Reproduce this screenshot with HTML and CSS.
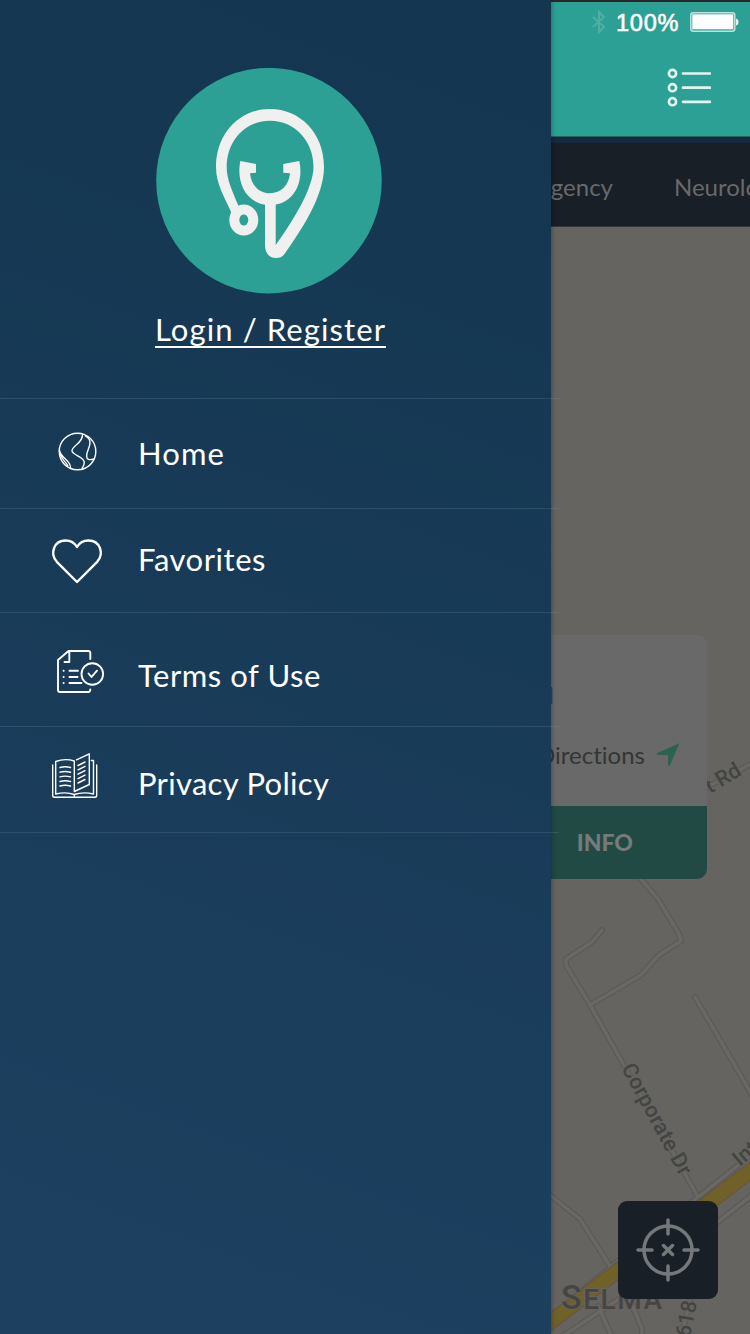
FILE: index.html
```html
<!DOCTYPE html>
<html lang="en">
<head>
<meta charset="utf-8">
<title>Menu</title>
<link rel="stylesheet" href="styles.css">
</head>
<body>
<div class="screen">
  <div class="app">
    <header class="topbar">
      <div class="status">
        <svg class="bluetooth" width="16" height="26" viewBox="0 0 16 26"><path d="M2 8L13 18L8 23V3L13 8L2 18"/></svg>
        <span class="percent">100%</span>
        <svg class="battery" width="49" height="20" viewBox="0 0 49 20"><rect x=".8" y=".8" width="44" height="18.4" rx="2.5" fill="none" stroke="#bfe2dd" stroke-width="1.5"/><rect x="2.3" y="2.3" width="41" height="15" fill="#fff"/><path d="M46 6.5q2.5.5 2.5 3.5T46 13.500z" fill="#e8f5f3"/></svg>
      </div>
      <svg class="list-icon" width="44" height="40" viewBox="0 0 44 40" fill="none" stroke="#e3f3f0"><g stroke-width="2.6"><circle cx="5.500" cy="5.500" r="3.600"/><circle cx="5.500" cy="19.700" r="3.600"/><circle cx="5.500" cy="33.700" r="3.600"/></g><path d="M16 5.500H43M16 19.700H43M16 33.800H43" stroke-width="2.700" stroke-linecap="round"/></svg>
    </header>
    <nav class="tabs">
      <span class="tab tab-emergency">Emergency</span>
      <span class="tab tab-neurology">Neurology</span>
    </nav>
    <main class="map">
      <svg class="streets" width="750" height="1108" viewBox="0 226 750 1108">
        <defs>
          <g id="roads" fill="none" stroke-linejoin="round" stroke-linecap="round">
            <path d="M640 877L658 898L679 933L681 940L659 954L641 974L590 1004"/>
            <path d="M602 929L592 941L566 958V964L590 1004L698 1196"/>
            <path d="M695 996L752 1094"/>
            <path d="M545 1190L580 1218L608 1262L624 1284L642 1328V1338"/>
            <path d="M700 790L760 758"/>
            <path d="M540 1325L620 1258L760 1147"/>
            <path d="M540 1350L622 1296L760 1188"/>
            <path d="M598 1305L613 1338M690 1300L680 1340"/>
          </g>
        </defs>
        <use href="#roads" stroke="#5c5a56" stroke-width="6"/>
        <use href="#roads" stroke="#6a6865" stroke-width="3.500"/>
        <path d="M540 1329L620 1268L756 1166" fill="none" stroke="#6a543f" stroke-width="16"/>
        <path d="M540 1329L620 1268L756 1166" fill="none" stroke="#706128" stroke-width="13.500"/>
        <g class="street-label">
          <text transform="translate(621 1067) rotate(61.500)" textLength="124">Corporate Dr</text>
          <text transform="translate(710 793) rotate(-31)">t Rd</text>
          <text transform="translate(740 1166) rotate(-40)">Interstate</text>
          <text transform="translate(690 1337) rotate(-79)">618</text>
        </g>
        <text class="city" x="561" y="1308" textLength="101"><tspan class="city-initial">S</tspan>ELMA</text>
      </svg>
      <article class="card">
        <p class="place">Wellness Clinic Alabama Hospital</p>
        <p class="directions">Directions
          <svg width="24" height="24" viewBox="0 0 24 24"><path d="M23.500.3L13.500 23Q12 23 12 21.500V12.200L1.500 11.800Q0 11 1.200 10Z" fill="#2b6251"/></svg>
        </p>
        <div class="info">INFO</div>
      </article>
      <div class="locate">
        <svg width="64" height="64" viewBox="0 0 64 64" fill="none" stroke="#74787b" stroke-width="3.500" stroke-linecap="round"><circle cx="32" cy="32" r="24"/><path d="M32 2V16M32 48V62M2 32H16M48 32H62M27.500 27.500L36.500 36.500M36.500 27.500L27.500 36.500"/></svg>
      </div>
    </main>
  </div>

  <aside class="drawer">
    <div class="profile">
      <svg class="logo" width="226" height="226" viewBox="156 68 226 226">
        <circle cx="269" cy="180.700" r="112.800" fill="#2ca095"/>
        <g fill="#f0f0f0">
          <path d="M265 200V245C265 253 269 258 276 258C280 258 282 257 284.500 254C300 232 324 197 324 167C324 133 300 109 270 109C240 109 216 133 216 167C216 184 224 196 232 214L239 207C232 190 226.700 180 226.700 167C226.700 141 245 120.700 270 120.700C295 120.700 313.500 141 313.500 167C313.500 187 294 220 275.700 245V200Z"/>
          <path d="M240.300 161L256 164V172.700L250 173.300C251 185 259 193.300 270 193.300C281 193.300 289 185 290 173.300L283.300 172.700V164L299.300 161C304 182 294 205 270 205C246 205 236 182 240.300 161Z"/>
        </g>
        <ellipse cx="243.800" cy="220" rx="9.500" ry="10.600" fill="none" stroke="#f0f0f0" stroke-width="10"/>
      </svg>
      <a class="login">Login / Register</a>
    </div>
    <ul class="menu">
      <li class="item home">
        <svg width="52" height="52" viewBox="52 426 52 52" stroke-width="1.400"><circle cx="77.500" cy="451.500" r="18.300"/><path d="M82.500 434C83.500 443 71.500 446 72 451C72.500 455 84 457 84.300 462C84.500 465 83 467 81.700 469M85 435.500C88 437 89.500 438.500 90 442C90.500 447 86.500 451 86.600 456C86.700 459.500 89 460.500 94 459M59.300 450C61 459 70 459 70.700 468M60 454C63 461 65 461 68 466"/></svg>
        <span class="label">Home</span>
      </li>
      <li class="item favorites">
        <svg width="52" height="52" viewBox="52 535 52 52" stroke-width="2.400"><path d="M77 582L56.800 561.800C49.500 553.500 54 540.500 65.500 540.500C71 540.500 75 543.500 77 547C79 543.500 83 540.500 88.500 540.500C100 540.500 104.500 553.500 97.200 561.800Z"/></svg>
        <span class="label">Favorites</span>
      </li>
      <li class="item terms">
        <svg width="52" height="52" viewBox="52 645 52 52" stroke-width="1.900" stroke-linecap="round"><path d="M90.300 659V653Q90.300 651 88.300 651H68.500L58 660V690Q58 692 60 692H88.300Q90.300 692 90.300 689.500M69.300 651V662H64.500M69.500 670.700H78M69.500 677H77.500M69.500 683H81.500M63.600 670.700h.1M63.600 677h.1M63.600 683h.1M88.500 673.500L91.500 677L97 670.700"/><circle cx="92.300" cy="674" r="10.800"/></svg>
        <span class="label">Terms of Use</span>
      </li>
      <li class="item privacy">
        <svg width="52" height="52" viewBox="52 750 52 52" stroke-width="1.400" stroke-linecap="round"><path d="M52.700 765V795.500Q52.700 797.300 54.700 797.300H94.700Q96.700 797.300 96.700 795.500V765M74.300 794.500Q66 791.500 55.700 794V761.500Q65 758 74.300 761V791.500L89.300 784.500V753.800L76.500 759.800M91.300 760.500H93.500V794Q83 791.500 74.300 794.500V797M60 767.500Q65 766 70.500 767.500M60 772.200Q65 770.700 70.500 772.200M60 776.900Q65 775.400 70.500 776.900M60 781.500Q65 780 70.500 781.500M60 786Q65 784.500 70.500 786M78 765.500L85 762M78 769.800L85 766.300M78 774.200L85 770.700M78 778.600L85 775.100M78 783L85 779.500"/></svg>
        <span class="label">Privacy Policy</span>
      </li>
    </ul>
  </aside>
</div>
</body>
</html>
```
FILE: styles.css
```css
* { box-sizing: border-box; }
body { margin: 0; font-family: Lato, sans-serif; font-variant-ligatures: none; }
p, ul { margin: 0; padding: 0; }
svg { display: block; flex: none; }

.screen { position: relative; width: 750px; height: 1334px; overflow: hidden; }
.app { display: flex; flex-direction: column; height: 100%; }

.topbar {
  height: 137px;
  border-top: 2px solid #2b2729;
  border-bottom: 1px solid #24645f;
  background: #2ca095;
  display: flex;
  flex-direction: column;
  align-items: flex-end;
}
.status { display: flex; align-items: center; height: 40px; padding-right: 11px; color: #fff; }
.bluetooth { fill: none; stroke: #50aea3; stroke-width: 2; margin-right: 9px; }
.percent { font: 500 23.500px/40px "Liberation Sans", Arial, sans-serif; width: 65px; margin: 2px 9px 0 0; -webkit-text-stroke: .6px #fff; letter-spacing: .8px; white-space: nowrap; }
.list-icon { margin: 26px 39px 0 0; }

.tabs {
  height: 90px;
  border-top: 6px solid #17293e;
  border-bottom: 1px solid #32363a;
  background: #191f26;
  display: flex;
  align-items: center;
  gap: 61px;
  padding: 4px 0 0 497px;
  overflow: hidden;
}
.tab { flex: none; font-size: 24px; color: #66696d; text-align: right; }
.tab-emergency { width: 116px; display: flex; justify-content: flex-end; }

.map { position: relative; flex: 1; overflow: hidden; background: #656460; }
.street-label { font: 500 21.500px Roboto, sans-serif; fill: #444442; stroke: #656460; stroke-width: 3px; paint-order: stroke; }
.city { font: 500 28px Roboto, sans-serif; fill: #464543; stroke: #656460; stroke-width: 2px; paint-order: stroke; }
.city-initial { font-size: 34px; }

.card {
  position: absolute;
  left: 43px;
  top: 408px;
  width: 664px;
  height: 244px;
  display: flex;
  flex-direction: column;
  align-items: flex-end;
  border-radius: 10px;
  background: #696969;
  overflow: hidden;
}
.place { margin: 45px 153px 0 0; font-size: 24px; line-height: 30px; color: #414141; }
.directions { display: flex; align-items: center; gap: 11px; margin: 30px 27px 0 0; font-size: 24px; line-height: 30px; color: #353535; }
.info { width: 100%; height: 73px; margin-top: auto; padding: 0 74px 0 0; background: #214a45; color: #747b79; font-size: 23px; font-weight: 900; line-height: 72px; text-align: right; }

.locate {
  position: absolute;
  left: 618px;
  top: 974px;
  width: 100px;
  height: 98px;
  border-radius: 9px;
  background: #191f26;
  display: flex;
  align-items: center;
  justify-content: center;
}

.drawer {
  position: absolute;
  left: 0;
  top: 0;
  width: 551px;
  height: 100%;
  background: linear-gradient(200deg, #143650 8%, #1d4060 92%);
  box-shadow: 0 0 5px rgba(0, 0, 0, .4);
  color: #fff;
}
.profile { display: flex; flex-direction: column; align-items: center; height: 398px; padding: 68px 13px 0 0; }
.login { margin: 15px 0 0 3px; height: 39px; line-height: 40px; font-size: 31px; letter-spacing: 1.1px; white-space: nowrap; border-bottom: 2px solid #fff; }

.menu { width: 559px; list-style: none; border-top: 1px solid rgba(120, 155, 175, .22); }
.item { display: flex; align-items: flex-start; gap: 34px; padding-left: 52px; border-bottom: 1px solid rgba(120, 155, 175, .22); }
.item svg { fill: none; stroke: #fff; stroke-linejoin: round; overflow: visible; }
.label { font-size: 31px; line-height: 40px; letter-spacing: .55px; white-space: nowrap; }
.home { height: 110px; padding-top: 27px; }
.home .label { margin-top: 7px; letter-spacing: 1.1px; }
.favorites { height: 104px; padding-top: 26px; }
.favorites .label { margin-top: 4px; }
.terms { height: 114px; padding-top: 32px; }
.terms .label { margin-top: 10px; }
.privacy { height: 106px; padding-top: 23px; }
.privacy .label { margin-top: 13px; letter-spacing: .3px; }
```
